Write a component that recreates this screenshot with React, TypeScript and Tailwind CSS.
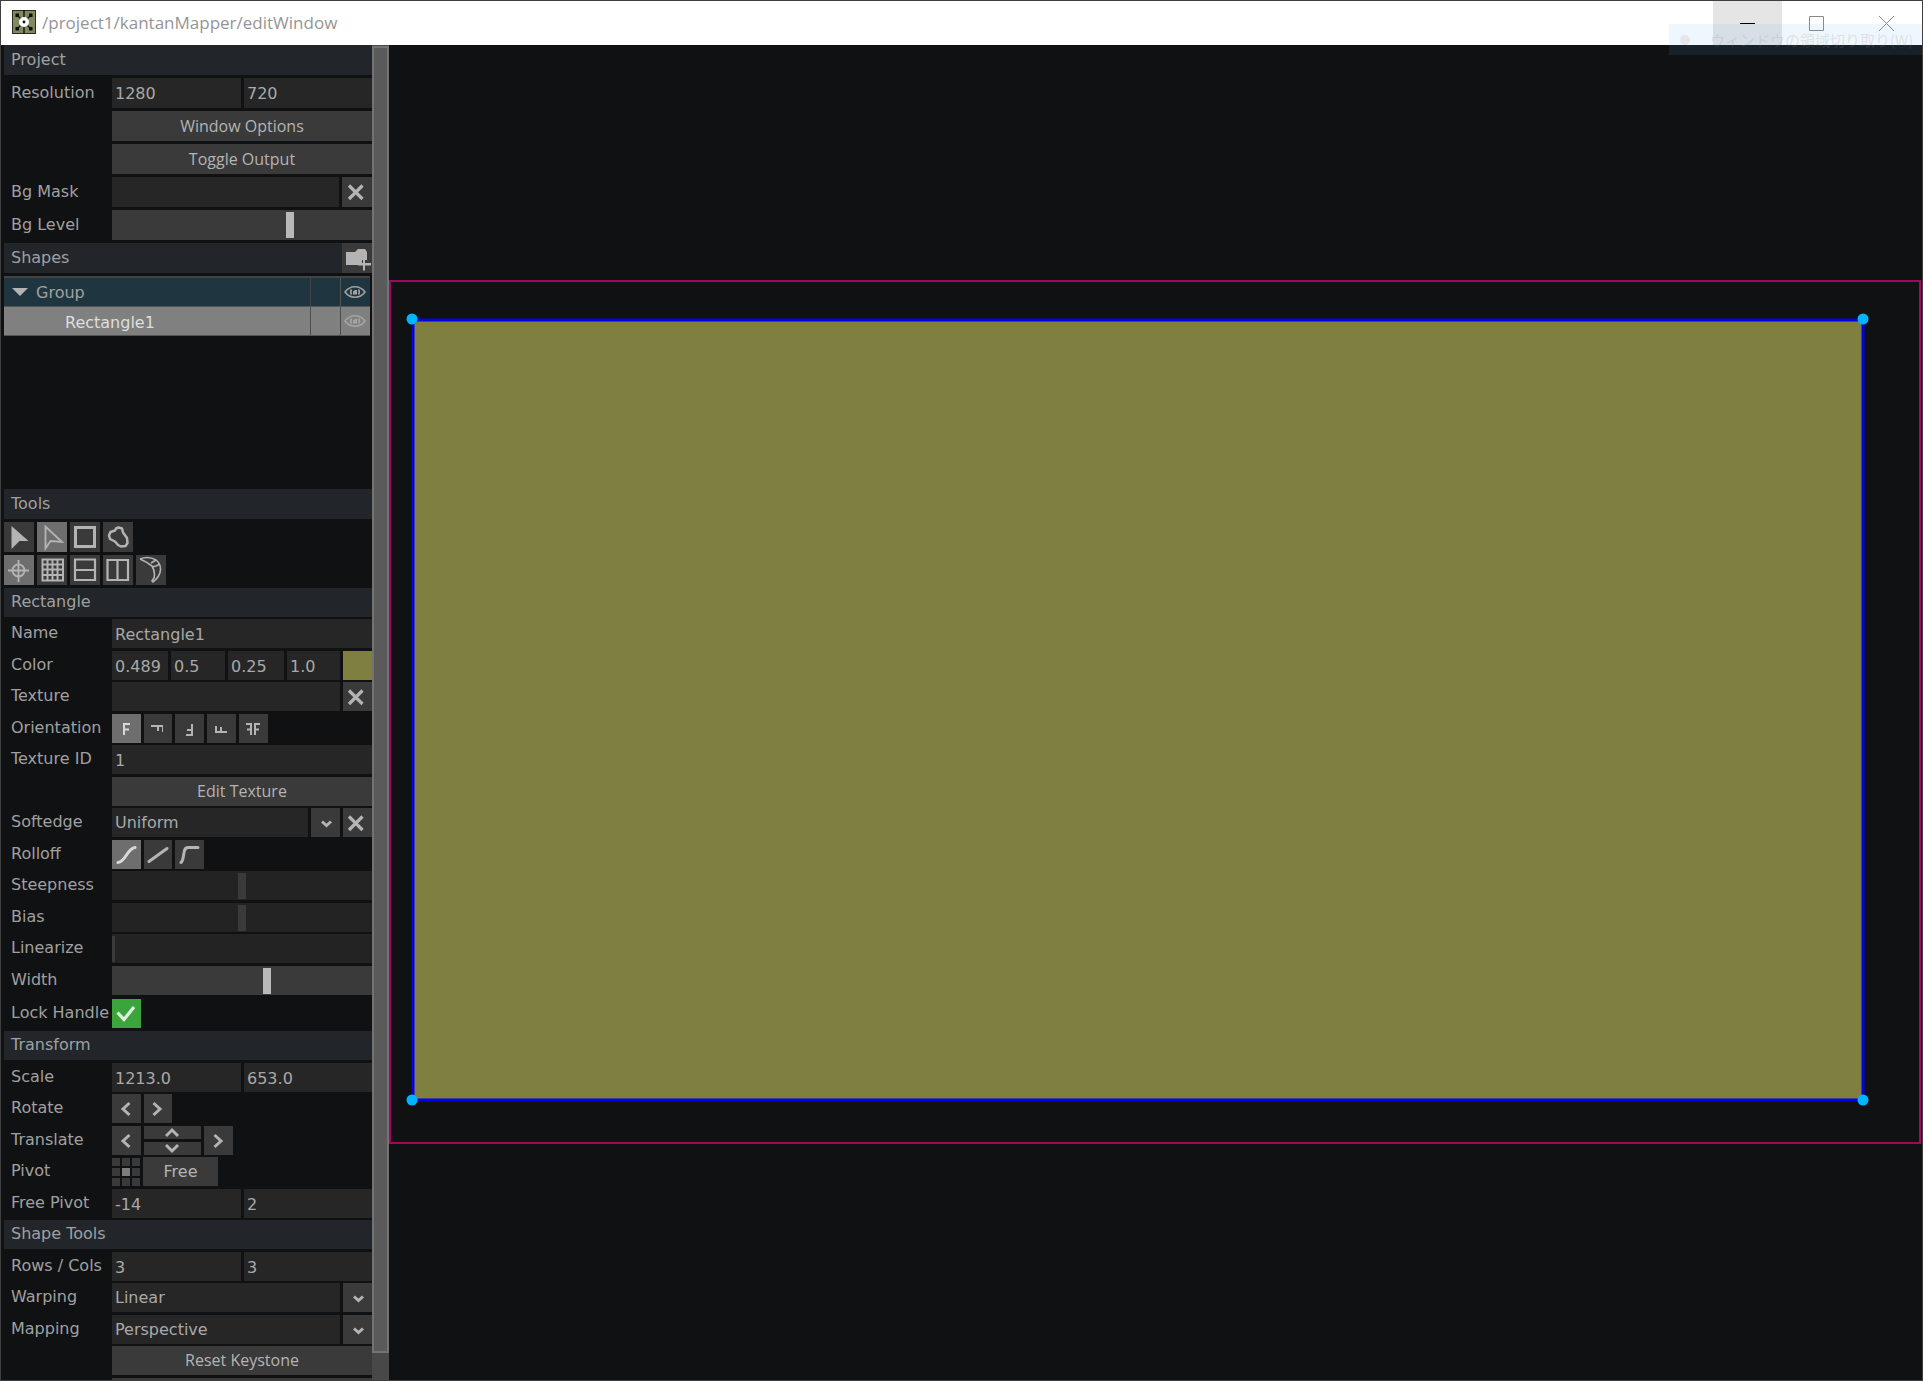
import { type ReactNode } from "react";

const CELL = "h-full bg-[#262626] px-[3px] pt-px text-[#a9a9a9] outline-none min-w-0 rounded-none";
const BUTTON = "h-full bg-[#3a3a3a] text-[#b4b4b4] flex items-center justify-center shrink-0";
const ACTIVE = "h-full bg-[#6e6e6e] text-[#d8d8d8] flex items-center justify-center shrink-0";
const WIDE = "h-full w-full bg-[#3a3a3a] pb-px font-['Open_Sans',sans-serif] text-[#b4b4b4]";

function Header({ title, tall, children }: { title: string; tall?: boolean; children?: ReactNode }) {
  return (
    <div className={`flex shrink-0 items-center justify-between bg-[#22262b] pl-[7px] ${tall ? "h-[30px]" : "h-[29px]"}`}>
      <h2 className={tall ? "" : "pb-px"}>{title}</h2>
      {children}
    </div>
  );
}

function Row({ label, id, tall, children }: { label?: string; id?: string; tall?: boolean; children: ReactNode }) {
  return (
    <div className={`flex shrink-0 items-center ${tall ? "h-[30px]" : "h-[29px]"}`}>
      <div className={`w-[108px] shrink-0 whitespace-nowrap pl-[7px] ${tall ? "" : "pb-0.5"}`}>
        {label && (id ? <label htmlFor={id}>{label}</label> : <span>{label}</span>)}
      </div>
      <div className="flex h-full min-w-0 flex-1 gap-[3px]">{children}</div>
    </div>
  );
}

function Pair({ id, a, b, label }: { id: string; a: string; b: string; label: string }) {
  return (
    <>
      <input id={id} defaultValue={a} className={`${CELL} w-[129px]`} />
      <input aria-label={`${label} second value`} defaultValue={b} className={`${CELL} flex-1`} />
    </>
  );
}

function Slider({ id, value, kind }: { id: string; value: number; kind: "on" | "off" | "edge" }) {
  const look = {
    on: "bg-[#3a3a3a] [&::-webkit-slider-thumb]:w-2 [&::-webkit-slider-thumb]:bg-[#b9b9b9]",
    off: "bg-[#232323] [&::-webkit-slider-thumb]:w-2 [&::-webkit-slider-thumb]:bg-[#3a3a3a]",
    edge: "bg-[#232323] [&::-webkit-slider-thumb]:w-[3px] [&::-webkit-slider-thumb]:bg-[#3a3a3a]",
  }[kind];
  return (
    <input
      id={id}
      type="range"
      min={0}
      max={100}
      defaultValue={value}
      className={`h-full w-full appearance-none [&::-webkit-slider-thumb]:h-[26px] [&::-webkit-slider-thumb]:appearance-none ${look}`}
    />
  );
}

function Cross() {
  return (
    <svg className="mr-[3px]" width="18" height="18" viewBox="0 0 18 18" fill="none" stroke="currentColor" strokeWidth="3.2">
      <path d="M2 2.5 15.5 16M15.5 2.5 2 16" />
    </svg>
  );
}

function Chevron({ dir }: { dir: "left" | "right" | "up" | "down" | "drop" }) {
  const d = {
    left: "M10.5 2 4 8l6.500 6",
    right: "M3.500 2 10 8l-6.500 6",
    up: "M1 11 7 5l6 6",
    down: "M1 4 7 10l6-6",
    drop: "M4 6.500 8.500 10.500 13 6.500",
  }[dir];
  return (
    <svg width="16" height="16" viewBox="0 0 16 16" fill="none" stroke="currentColor" strokeWidth="3">
      <path d={d} />
    </svg>
  );
}

function Eye() {
  return (
    <svg className="mr-px" width="22" height="14" viewBox="0 0 22 14" fill="none" stroke="currentColor" strokeWidth="1.6">
      <path d="M1 7C4 3 7 1.8 11 1.8S18 3 21 7c-3 4-6 5.2-10 5.2S4 11 1 7Z" />
      <path d="M7.5 4.5C6.5 6 6.5 8 7.5 9.5M14.5 4.5c1 1.5 1 3.5 0 5" />
      <path d="M9 9.5V6.5L11 5h2v4.5Z" fill="currentColor" stroke="none" />
    </svg>
  );
}

function Letter({ path, width = 12 }: { path: string; width?: number }) {
  return (
    <svg className="mr-0.5" width={width} height="14" viewBox={`0 0 ${width} 14`} fill="none" stroke="currentColor" strokeWidth="2">
      <path d={path} />
    </svg>
  );
}

function Field({ id, options, clear }: { id: string; options: string[]; clear?: boolean }) {
  return (
    <>
      <select id={id} className={`${CELL} flex-1 appearance-none`}>
        {options.map((o) => (
          <option key={o}>{o}</option>
        ))}
      </select>
      <button aria-label={`Open ${id} list`} className={`${BUTTON} w-[29px] text-[#929292]`}>
        <Chevron dir="drop" />
      </button>
      {clear && (
        <button aria-label={`Clear ${id}`} className={`${BUTTON} w-[29px]`}>
          <Cross />
        </button>
      )}
    </>
  );
}

function TitleBar() {
  return (
    <header className="flex h-11 shrink-0 items-center bg-white font-['Open_Sans',sans-serif]">
      <svg className="mb-0.5 ml-[11px]" width="24" height="24" viewBox="0 0 24 24">
        <rect x="0.5" y="0.5" width="23" height="23" fill="#7f8a5e" stroke="#2a2c20" />
        <path d="M12 0v24M5 5l14 14M19 5 5 19" stroke="#15160f" strokeWidth="1.4" />
        <path d="M3.500 3.500h3.500v3.500h-3.500zM17 3.500h3.500v3.500H17zM3.500 17h3.500v3.500h-3.500zM17 17h3.500v3.500H17z" fill="#0c0c08" />
        <circle cx="12" cy="12" r="5" fill="#fff" />
        <circle cx="12" cy="12" r="1.4" fill="#111" />
      </svg>
      <h1 className="ml-1.5 flex-1 text-[17px] text-[#959595]">/project1/kantanMapper/editWindow</h1>
      <div className="flex h-full text-[#8a8a8a]">
        <button aria-label="Minimize" className="flex w-[69px] items-center justify-center bg-[#e5e5e5] text-black">
          <svg width="15" height="15" viewBox="0 0 15 15" stroke="currentColor">
            <path d="M0 7.5h15" />
          </svg>
        </button>
        <button aria-label="Maximize" className="flex w-[69px] items-center justify-center">
          <svg width="15" height="15" viewBox="0 0 15 15" stroke="currentColor" fill="none">
            <path d="M.5.5h14v14H.5z" />
          </svg>
        </button>
        <button aria-label="Close" className="flex w-[71px] items-center justify-center">
          <svg width="15" height="15" viewBox="0 0 15 15" stroke="currentColor">
            <path d="M0 0l15 15M15 0 0 15" />
          </svg>
        </button>
      </div>
    </header>
  );
}

function ProjectSection() {
  return (
    <section className="flex flex-col gap-[3px]">
      <Header title="Project" tall />
      <Row label="Resolution" id="resolution" tall>
        <Pair id="resolution" label="Resolution" a="1280" b="720" />
      </Row>
      <Row tall>
        <button className={WIDE}>Window Options</button>
      </Row>
      <Row tall>
        <button className={WIDE}>Toggle Output</button>
      </Row>
      <Row label="Bg Mask" id="bgmask" tall>
        <input id="bgmask" className={`${CELL} flex-1`} />
        <button aria-label="Clear background mask" className={`${BUTTON} w-[30px]`}>
          <Cross />
        </button>
      </Row>
      <Row label="Bg Level" id="bglevel" tall>
        <Slider id="bglevel" value={69} kind="on" />
      </Row>
      <Header title="Shapes" tall>
        <button aria-label="Add group" className={`${BUTTON} w-[30px]`}>
          <svg width="30" height="30" viewBox="0 0 30 30" fill="currentColor">
            <path d="M4 9h9l3-3h7l2 3v8h-5v4h-4v1H4z" />
            <path d="M21 15h2v5h6v2.500h-6v5h-2v-5h-5v-2.500h5z" />
          </svg>
        </button>
      </Header>
    </section>
  );
}

function ShapeTree() {
  return (
    <div className="mt-[3px] h-[213px] shrink-0">
      <div className="mr-0.5 border-t-2 border-[#444]">
        <div className="flex h-7 items-center bg-[#1f3640]">
          <svg className="ml-2" width="16" height="8" viewBox="0 0 16 8" fill="#b4b4b4">
            <path d="M0 0h16L8 8z" />
          </svg>
          <span className="flex-1 pl-2 pt-0.5">Group</span>
          <span className="h-full w-[30px] border-l border-[#444]" />
          <button aria-label="Toggle group" className="flex h-full w-[30px] items-center justify-center border-l border-[#555]">
            <Eye />
          </button>
        </div>
        <div className="flex h-[30px] items-center border-y border-[#555] bg-[#808080] text-[#dedede]">
          <span className="flex-1 pl-[61px] pt-1">Rectangle1</span>
          <span className="h-full w-[30px] border-l border-[#4c4c4c]" />
          <button aria-label="Toggle Rectangle1" className="flex h-full w-[30px] items-center justify-center border-l border-[#4c4c4c] text-[#a4a4a4]">
            <Eye />
          </button>
        </div>
      </div>
    </div>
  );
}

const TOOLS = [
  { name: "Select", icon: <path d="M7.5 4v23l8-8h9z" fill="currentColor" /> },
  { name: "Edit points", on: true, icon: <path d="M8.5 4.5v22l5-7.500 11.500 1z" fill="none" stroke="currentColor" strokeWidth="1.8" /> },
  { name: "Rectangle", icon: <path d="M5.500 5.500h19v19h-19z" fill="none" stroke="currentColor" strokeWidth="3" /> },
  {
    name: "Freeform",
    icon: (
      <path
        d="M13 6.500 15.500 5.500 19 6.500 20 10.500 24 16 24.500 21 22.500 24 18 24.500 15 23 12 19.500 7 17 6 13.500 7.500 10 12 8.500z"
        fill="none"
        stroke="currentColor"
        strokeWidth="2.500"
        strokeLinejoin="round"
      />
    ),
  },
];

const SNAPS = [
  {
    name: "Show crosshair",
    on: true,
    icon: (
      <g fill="none" stroke="currentColor" strokeWidth="1.8">
        <circle cx="14.5" cy="15.5" r="6" />
        <path d="M14.5 5v22M4 15.5h21" />
      </g>
    ),
  },
  {
    name: "Grid",
    icon: <path d="M5.500 4.500h20.500v21H5.500zM10.500 4v22M15.500 4v22M20.500 4v22M5 9.500h21M5 14.500h21M5 20h21" fill="none" stroke="currentColor" strokeWidth="2" />,
  },
  { name: "Split rows", icon: <path d="M5 4.500h20v20.500H5zM5 15h20" fill="none" stroke="currentColor" strokeWidth="2.2" /> },
  { name: "Split columns", icon: <path d="M4.500 5h20.500v20H4.500zM14.500 5v20" fill="none" stroke="currentColor" strokeWidth="2.2" /> },
  {
    name: "Bezier",
    icon: (
      <path
        d="M4 4c5-2 11-2 16 1 6 5 7 14-3 22l-1-1 2-3c1-4 1-7-2-12-4-3-7-5-12-7M16 12l4-1 4-2M15 8l5-3"
        fill="none"
        stroke="currentColor"
        strokeWidth="1.6"
      />
    ),
  },
];

function ToolRow({ tools }: { tools: { name: string; on?: boolean; icon: ReactNode }[] }) {
  return (
    <div className="flex h-[30px] gap-[3px]">
      {tools.map((t) => (
        <button key={t.name} aria-label={t.name} className={`${t.on ? ACTIVE : BUTTON} w-[30px]`}>
          <svg width="30" height="30" viewBox="0 0 30 30" className="text-[#b4b4b4]">
            {t.icon}
          </svg>
        </button>
      ))}
    </div>
  );
}

function RectangleSection() {
  return (
    <section className="mt-[3px] flex flex-col [&>*:nth-child(even)]:mb-[3px] [&>*:nth-child(odd)]:mb-0.5">
      <Header title="Rectangle" />
      <Row label="Name" id="name">
        <input id="name" defaultValue="Rectangle1" className={`${CELL} flex-1`} />
      </Row>
      <Row label="Color" id="red">
        <input id="red" defaultValue="0.489" className={`${CELL} w-14`} />
        <input aria-label="Green" defaultValue="0.5" className={`${CELL} w-[54px]`} />
        <input aria-label="Blue" defaultValue="0.25" className={`${CELL} w-14`} />
        <input aria-label="Alpha" defaultValue="1.0" className={`${CELL} flex-1`} />
        <button aria-label="Pick color" className="h-full w-[29px] bg-[#7f7f40]" />
      </Row>
      <Row label="Texture" id="texture">
        <input id="texture" className={`${CELL} flex-1`} />
        <button aria-label="Clear texture" className={`${BUTTON} w-[29px]`}>
          <Cross />
        </button>
      </Row>
      <Row label="Orientation">
        <button aria-label="Normal" className={`${ACTIVE} w-[29px]`}>
          <Letter path="M4 13V2h6M4 7.500h5" />
        </button>
        <button aria-label="Rotate 90" className={`${BUTTON} w-[28px]`}>
          <Letter path="M0 4h12v6M7 4v5" />
        </button>
        <button aria-label="Rotate 180" className={`${BUTTON} w-[29px]`}>
          <Letter path="M9 2v11H3M9 8H4" />
        </button>
        <button aria-label="Rotate 270" className={`${BUTTON} w-[29px]`}>
          <Letter path="M12 10H1V4M6 10V5" />
        </button>
        <button aria-label="Mirror" className={`${BUTTON} w-[29px]`}>
          <Letter width={16} path="M1 2h5v11M2 7.500h4M10 13V2h5M10 7.500h4" />
        </button>
      </Row>
      <Row label="Texture ID" id="textureid">
        <input id="textureid" defaultValue="1" className={`${CELL} flex-1`} />
      </Row>
      <Row>
        <button className={WIDE}>Edit Texture</button>
      </Row>
      <Row label="Softedge" id="softedge">
        <Field id="softedge" options={["Uniform", "Per Side"]} clear />
      </Row>
      <Row label="Rolloff">
        <button aria-label="S-curve" className={`${ACTIVE} w-[29px]`}>
          <svg width="22" height="20" viewBox="0 0 22 20" fill="none" stroke="currentColor" strokeWidth="3" strokeLinecap="round">
            <path d="M2 17.500c8-1 9-14 17-15" />
          </svg>
        </button>
        <button aria-label="Linear" className={`${BUTTON} w-[28px]`}>
          <svg width="22" height="20" viewBox="0 0 22 20" fill="none" stroke="currentColor" strokeWidth="3" strokeLinecap="round">
            <path d="M2 16.500 20 3.500" />
          </svg>
        </button>
        <button aria-label="Ease" className={`${BUTTON} w-[29px]`}>
          <svg width="22" height="20" viewBox="0 0 22 20" fill="none" stroke="currentColor" strokeWidth="3" strokeLinecap="round">
            <path d="M2 17.500c4-3 1-15 7-15h10" />
          </svg>
        </button>
      </Row>
      <Row label="Steepness" id="steepness">
        <Slider id="steepness" value={50} kind="off" />
      </Row>
      <Row label="Bias" id="bias">
        <Slider id="bias" value={50} kind="off" />
      </Row>
      <Row label="Linearize" id="linearize">
        <Slider id="linearize" value={0} kind="edge" />
      </Row>
      <Row label="Width" id="width">
        <Slider id="width" value={60} kind="on" />
      </Row>
      <div className="pt-0.5">
        <Row label="Lock Handle" id="lock">
          <span className="grid size-[29px]">
            <input id="lock" type="checkbox" defaultChecked className="col-start-1 row-start-1 size-[29px] appearance-none bg-[#3ba53b]" />
            <svg className="pointer-events-none col-start-1 row-start-1" width="29" height="29" viewBox="0 0 29 29" fill="none" stroke="#dff0df" strokeWidth="3.2">
              <path d="M5.500 13.500l6.500 7L22 8" />
            </svg>
          </span>
        </Row>
      </div>
    </section>
  );
}

function TransformSection() {
  return (
    <section className="flex flex-col [&>*:nth-child(even)]:mb-0.5 [&>*:nth-child(odd)]:mb-[3px]">
      <Header title="Transform" />
      <Row label="Scale" id="scale">
        <Pair id="scale" label="Scale" a="1213.0" b="653.0" />
      </Row>
      <Row label="Rotate">
        <button aria-label="Rotate left" className={`${BUTTON} w-[29px]`}>
          <Chevron dir="left" />
        </button>
        <button aria-label="Rotate right" className={`${BUTTON} w-[28px]`}>
          <Chevron dir="right" />
        </button>
      </Row>
      <Row label="Translate">
        <button aria-label="Move left" className={`${BUTTON} w-[29px]`}>
          <Chevron dir="left" />
        </button>
        <div className="flex w-[57px] flex-col gap-[3px]">
          <button aria-label="Move up" className="flex h-[13px] items-center justify-center bg-[#3a3a3a] text-[#b4b4b4]">
            <Chevron dir="up" />
          </button>
          <button aria-label="Move down" className="flex h-[13px] items-center justify-center bg-[#3a3a3a] text-[#b4b4b4]">
            <Chevron dir="down" />
          </button>
        </div>
        <button aria-label="Move right" className={`${BUTTON} w-[29px]`}>
          <Chevron dir="right" />
        </button>
      </Row>
      <Row label="Pivot">
        <div className="grid w-[28px] shrink-0 grid-cols-[8px_8px_8px] grid-rows-[8px_8px_8px] content-center gap-0.5">
          {Array.from({ length: 9 }, (_, i) => (
            <button key={i} aria-label={`Pivot ${i + 1}`} className={i === 4 ? "bg-[#7d7d7d]" : "bg-[#3a3a3a]"} />
          ))}
        </div>
        <button className={`${BUTTON} w-[75px]`}>Free</button>
      </Row>
      <Row label="Free Pivot" id="freepivot">
        <Pair id="freepivot" label="Free Pivot" a="-14" b="2" />
      </Row>
      <Header title="Shape Tools" />
      <Row label="Rows / Cols" id="rows">
        <Pair id="rows" label="Rows and columns" a="3" b="3" />
      </Row>
      <Row label="Warping" id="warping">
        <Field id="warping" options={["Linear", "Bezier"]} />
      </Row>
      <Row label="Mapping" id="mapping">
        <Field id="mapping" options={["Perspective", "Bilinear"]} />
      </Row>
      <Row>
        <button className={WIDE}>Reset Keystone</button>
      </Row>
      <Row>
        <button aria-label="More shape tools" className={WIDE} />
      </Row>
    </section>
  );
}

const CORNERS = [
  [23, 39],
  [1474, 39],
  [1474, 820],
  [23, 820],
];

function Canvas() {
  return (
    <main className="flex min-w-0 flex-1 items-center pb-0.5 pr-px">
      <svg viewBox="0 0 1532 864" className="w-full">
        <rect x="1" y="1" width="1530" height="862" fill="none" stroke="#a00a5e" strokeWidth="2" />
        <rect x="24" y="40" width="1450" height="780" fill="#7f7f40" stroke="#0000f0" strokeWidth="3" />
        {CORNERS.map(([x, y]) => (
          <circle key={`${x}-${y}`} cx={x} cy={y} r="5.5" fill="#00b4ff" />
        ))}
      </svg>
    </main>
  );
}

export default function App() {
  return (
    <div className="relative flex h-screen flex-col overflow-hidden border border-[#3f3f40] bg-[#101113] font-['DejaVu_Sans',sans-serif] text-base leading-5 text-[#a0a0a0]">
      <TitleBar />
      <div className="flex min-h-0 flex-1">
        <aside className="flex w-[371px] shrink-0 flex-col overflow-hidden pl-[3px]">
          <ProjectSection />
          <ShapeTree />
          <section className="flex flex-col gap-[3px]">
            <Header title="Tools" tall />
            <ToolRow tools={TOOLS} />
            <ToolRow tools={SNAPS} />
          </section>
          <RectangleSection />
          <TransformSection />
        </aside>
        <div className="flex w-[17px] shrink-0 flex-col bg-[#484848] pt-px">
          <div className="mb-[27px] flex-1 border-2 border-[#737373] bg-[#5a5a5a]" />
        </div>
        <Canvas />
      </div>
      <div className="pointer-events-none absolute right-0 top-[23px] flex h-[31px] w-[253px] items-center bg-[#5ab4f0]/10">
        <span className="ml-[11px] size-2.5 rounded-full bg-[#c8a090]/20" />
        <span className="ml-5 whitespace-nowrap font-['Noto_Sans_CJK_JP',sans-serif] text-[15px] text-[#a08070]/20">
          ウィンドウの領域切り取り(W)
        </span>
      </div>
    </div>
  );
}
